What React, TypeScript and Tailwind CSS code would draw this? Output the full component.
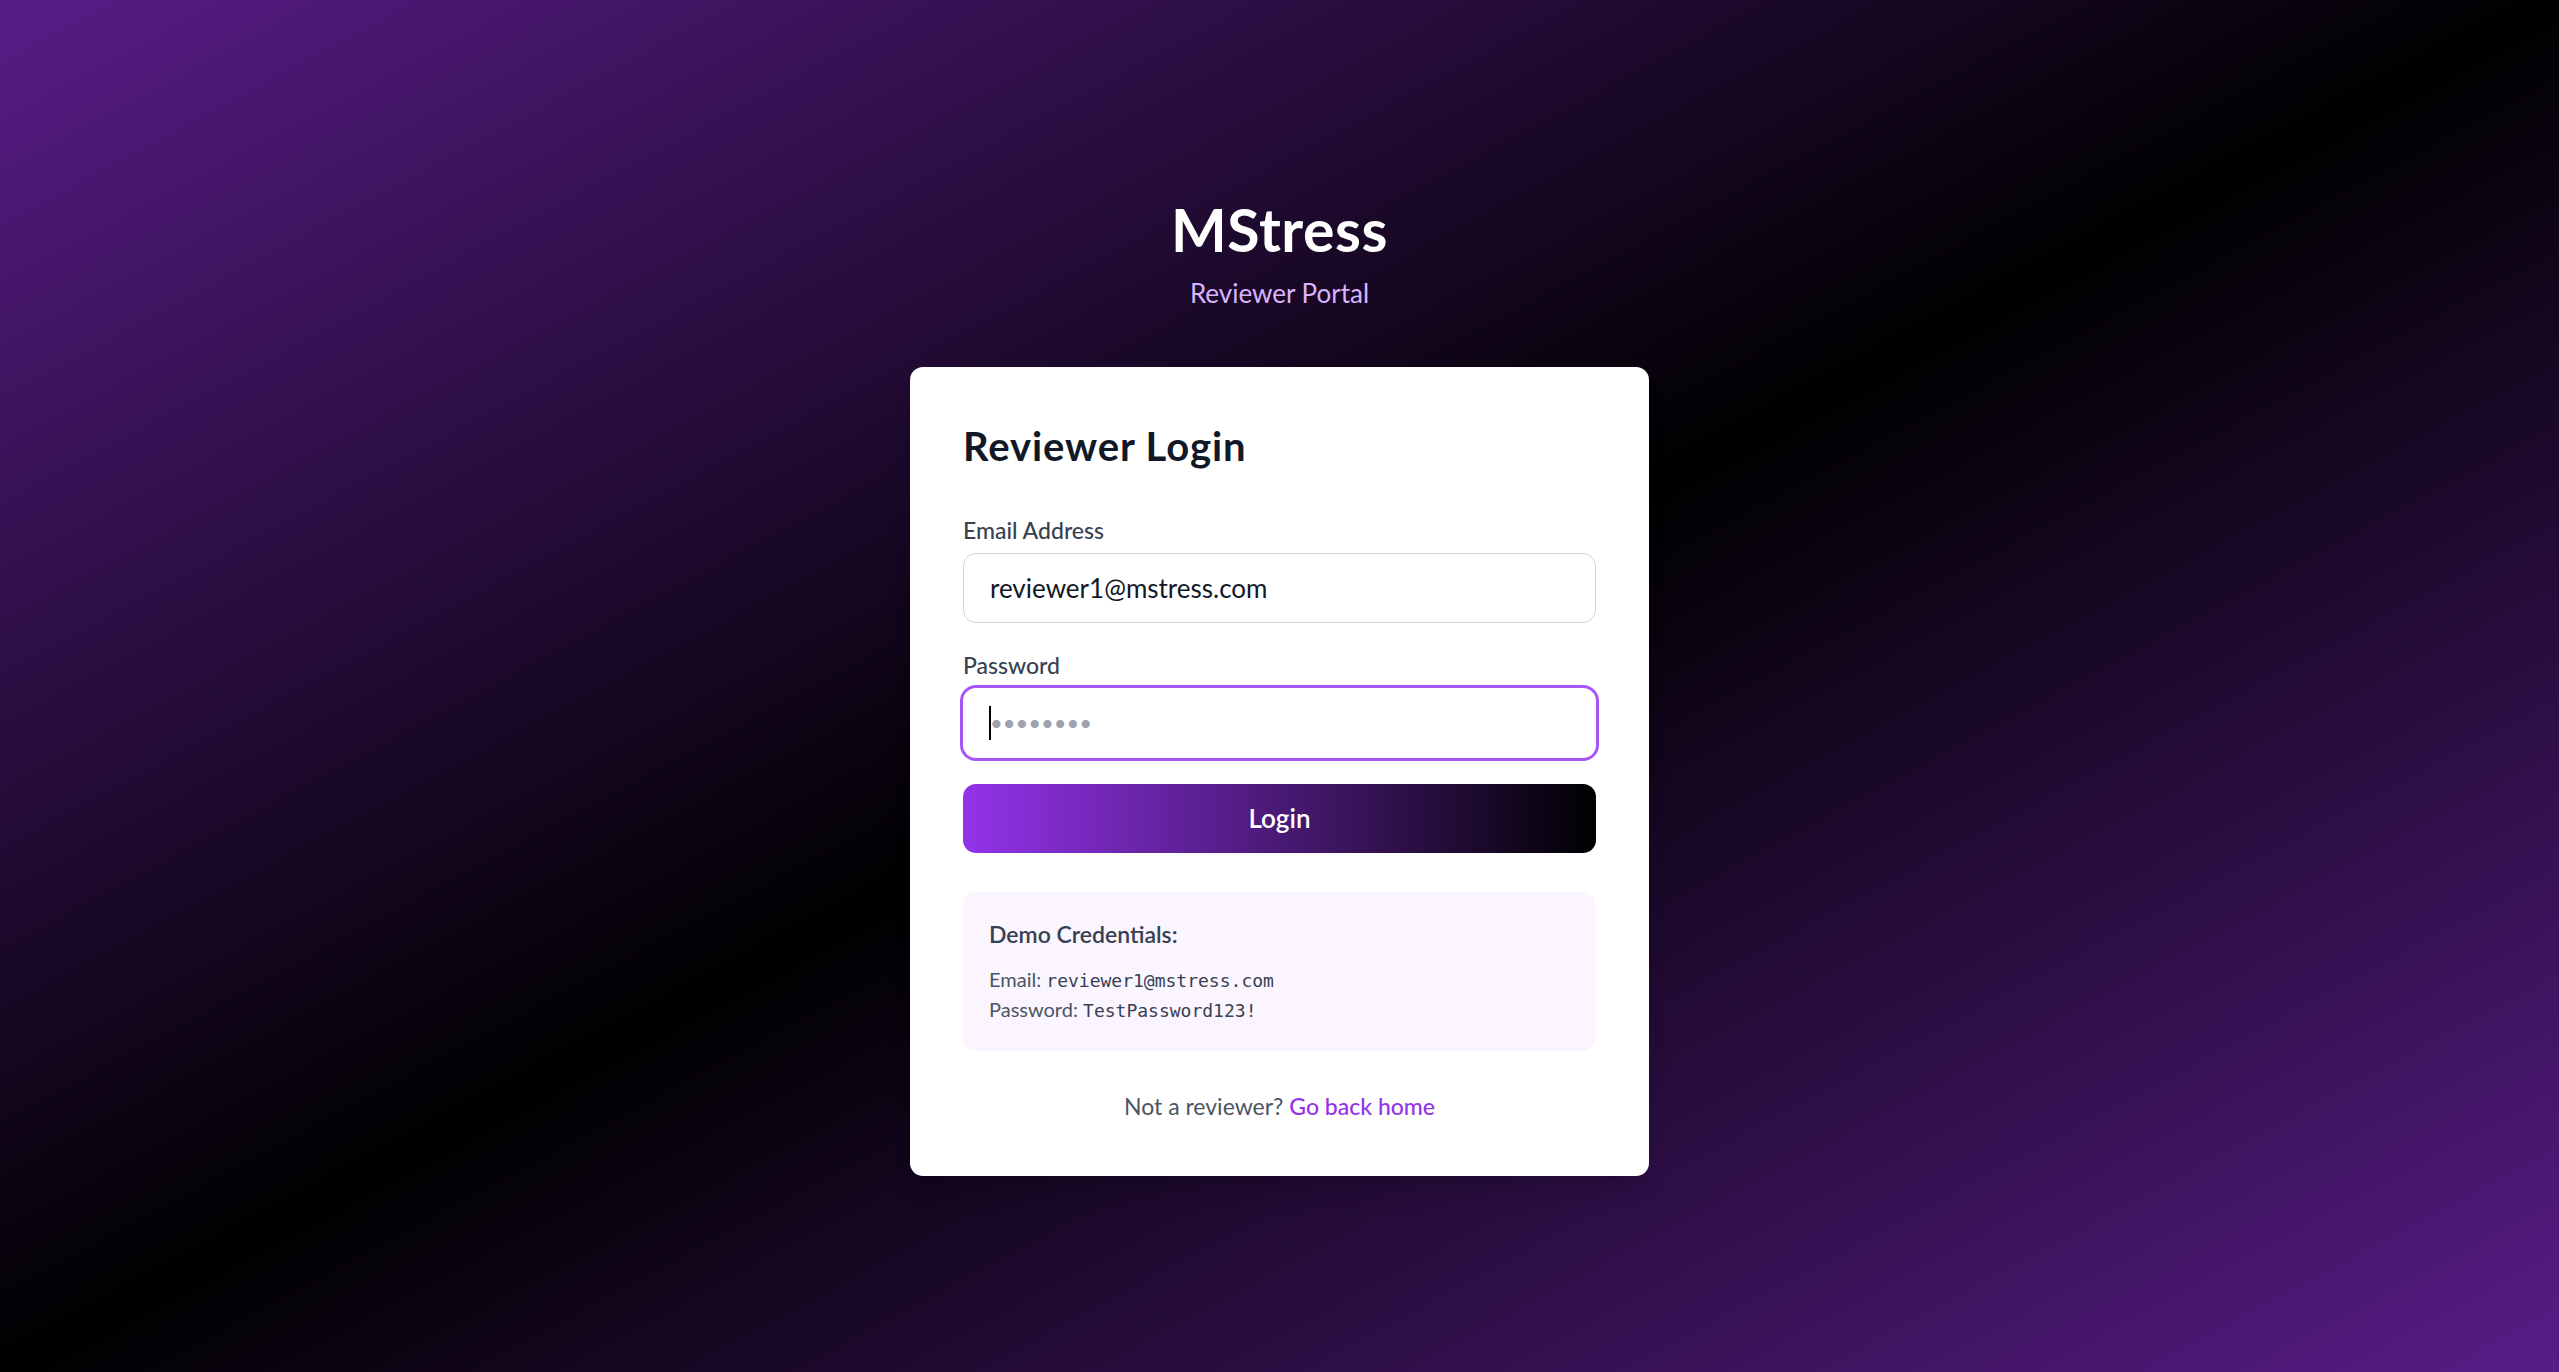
import React from "react";

export default function App() {
  return (
    <div
      className="min-h-screen w-full flex items-center justify-center bg-[linear-gradient(to_bottom_right,#581c87,#000000,#581c87)]"
      style={{ fontFamily: "Lato, 'Noto Sans', sans-serif" }}
    >
      <div className="w-[739px]">
        <div className="text-center mb-[54px]">
          <h1 className="text-[59px] leading-[65px] font-bold text-white tracking-[0.5px]">MStress</h1>
          <p className="mt-[12px] text-[26px] leading-[39px] text-[#d8b4fe]">Reviewer Portal</p>
        </div>

        <div className="bg-white rounded-[13px] shadow-xl p-[53px]">
          <h2 className="text-[40px] leading-[52px] font-bold text-[#111827] tracking-[0.9px] mb-[42px]">
            Reviewer Login
          </h2>

          <form className="flex flex-col gap-[26px]" onSubmit={(e) => e.preventDefault()}>
            <div>
              <label className="block text-[23px] leading-[33px] font-medium text-[#374151] mb-[6px]">
                Email Address
              </label>
              <input
                type="email"
                defaultValue="reviewer1@mstress.com"
                className="w-full h-[70px] px-[26px] text-[26px] text-[#111827] bg-white border-[1.5px] border-[#d1d5db] rounded-[13px] outline-none"
              />
            </div>

            <div>
              <label className="block text-[23px] leading-[33px] font-medium text-[#374151] mb-[6px]">
                Password
              </label>
              <div className="relative">
                <input
                  type="password"
                  placeholder="••••••••"
                  className="w-full h-[70px] px-[26px] text-[22px] text-[#111827] bg-white border-[1.5px] border-transparent rounded-[13px] outline-none ring-[3px] ring-[#a855f7] placeholder:text-[#9ca3af]"
                />
                <span className="absolute left-[26px] top-[18px] w-[2px] h-[34px] bg-black pointer-events-none" />
              </div>
            </div>

            <button
              type="submit"
              className="w-full h-[69px] rounded-[13px] bg-[linear-gradient(to_right,#9333ea,#000000)] text-white text-[26px] font-semibold"
            >
              Login
            </button>
          </form>

          <div className="mt-[39px] p-[26px] bg-[#faf5ff] rounded-[13px]">
            <p className="text-[23px] leading-[33px] font-semibold text-[#374151] mb-[14px]">Demo Credentials:</p>
            <p className="text-[20px] leading-[28px] text-[#4b5563]">
              Email:{" "}
              <span className="text-[18px] text-[#374151]" style={{ fontFamily: "'DejaVu Sans Mono', monospace" }}>
                reviewer1@mstress.com
              </span>
            </p>
            <p className="text-[20px] leading-[28px] text-[#4b5563]">
              Password:{" "}
              <span className="text-[18px] text-[#374151]" style={{ fontFamily: "'DejaVu Sans Mono', monospace" }}>
                TestPassword123!
              </span>
            </p>
          </div>

          <p className="mt-[39px] text-center text-[23px] leading-[33px] text-[#4b5563]">
            Not a reviewer?{" "}
            <a href="#" className="text-[#9333ea] font-medium">
              Go back home
            </a>
          </p>
        </div>
      </div>
    </div>
  );
}
